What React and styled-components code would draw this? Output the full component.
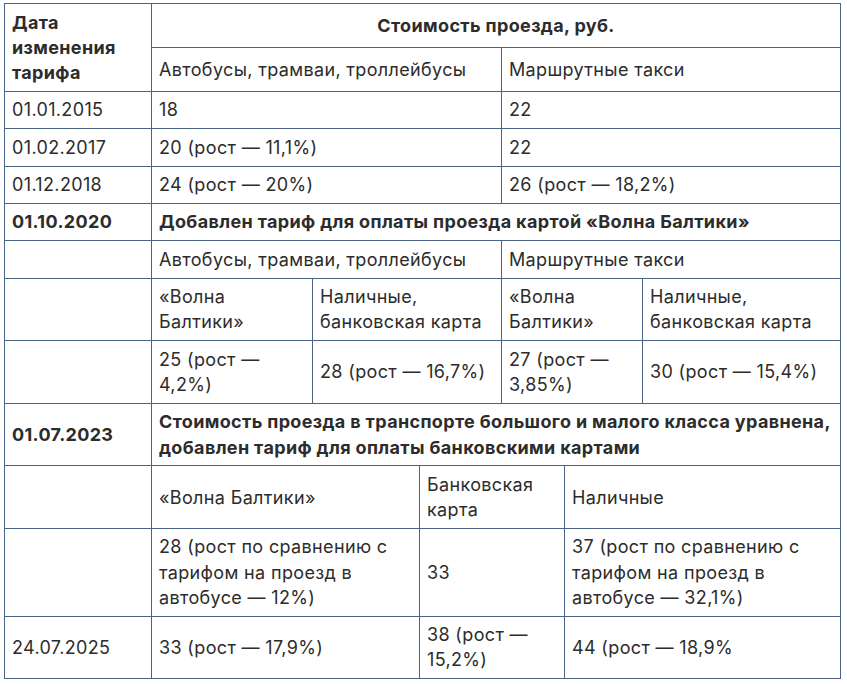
import React from "react";
import styled, { createGlobalStyle } from "styled-components";

const Global = createGlobalStyle`
  html, body { margin: 0; padding: 0; background: #fff; }
  body { font-family: Inter, "Noto Sans", sans-serif; color: #2c2c2c; }
`;

const Page = styled.div`
  padding: 3px 0 0 4px;
  overflow: hidden;
  height: 684px;
  box-sizing: border-box;
`;

const Table = styled.table`
  border-collapse: collapse;
  table-layout: fixed;
  width: 837px;
  font-size: 18px;
  line-height: 1.4;
  letter-spacing: 0.35px;
`;

const Cell = styled.td`
  border: 1px solid #4b6385;
  padding: 5.6px 7px;
  vertical-align: ${(p) => (p.$top ? "top" : "middle")};
  text-align: ${(p) => (p.$center ? "center" : "left")};
  font-weight: ${(p) => (p.$bold ? 700 : 400)};
  white-space: nowrap;
`;

const Caption = styled.div`
  margin-top: 2px;
  font-size: 15px;
  font-style: italic;
  color: #8a8a8a;
  line-height: 20px;
  padding-left: 1px;
`;

const widths = [147, 161, 107, 82, 63, 78, 198];

export default function App() {
  return (
    <>
      <Global />
      <Page>
        <Table>
          <colgroup>
            {widths.map((w, i) => (
              <col key={i} style={{ width: w }} />
            ))}
          </colgroup>
          <tbody>
            <tr>
              <Cell $bold $top rowSpan={2}>
                Дата
                <br />
                изменения
                <br />
                тарифа
              </Cell>
              <Cell $bold $center colSpan={6}>
                Стоимость проезда, руб.
              </Cell>
            </tr>
            <tr>
              <Cell colSpan={3}>Автобусы, трамваи, троллейбусы</Cell>
              <Cell colSpan={3}>Маршрутные такси</Cell>
            </tr>
            <tr>
              <Cell>01.01.2015</Cell>
              <Cell colSpan={3}>18</Cell>
              <Cell colSpan={3}>22</Cell>
            </tr>
            <tr>
              <Cell>01.02.2017</Cell>
              <Cell colSpan={3}>20 (рост — 11,1%)</Cell>
              <Cell colSpan={3}>22</Cell>
            </tr>
            <tr>
              <Cell>01.12.2018</Cell>
              <Cell colSpan={3}>24 (рост — 20%)</Cell>
              <Cell colSpan={3}>26 (рост — 18,2%)</Cell>
            </tr>
            <tr>
              <Cell $bold>01.10.2020</Cell>
              <Cell $bold colSpan={6}>
                Добавлен тариф для оплаты проезда картой «Волна Балтики»
              </Cell>
            </tr>
            <tr>
              <Cell />
              <Cell colSpan={3}>Автобусы, трамваи, троллейбусы</Cell>
              <Cell colSpan={3}>Маршрутные такси</Cell>
            </tr>
            <tr>
              <Cell />
              <Cell>
                «Волна
                <br />
                Балтики»
              </Cell>
              <Cell colSpan={2}>
                Наличные,
                <br />
                банковская карта
              </Cell>
              <Cell colSpan={2}>
                «Волна
                <br />
                Балтики»
              </Cell>
              <Cell>
                Наличные,
                <br />
                банковская карта
              </Cell>
            </tr>
            <tr>
              <Cell />
              <Cell>
                25 (рост —
                <br />
                4,2%)
              </Cell>
              <Cell colSpan={2}>28 (рост — 16,7%)</Cell>
              <Cell colSpan={2}>
                27 (рост —
                <br />
                3,85%)
              </Cell>
              <Cell>30 (рост — 15,4%)</Cell>
            </tr>
            <tr>
              <Cell $bold>01.07.2023</Cell>
              <Cell $bold colSpan={6}>
                Стоимость проезда в транспорте большого и малого класса уравнена,
                <br />
                добавлен тариф для оплаты банковскими картами
              </Cell>
            </tr>
            <tr>
              <Cell />
              <Cell colSpan={2}>«Волна Балтики»</Cell>
              <Cell colSpan={2}>
                Банковская
                <br />
                карта
              </Cell>
              <Cell colSpan={2}>Наличные</Cell>
            </tr>
            <tr>
              <Cell />
              <Cell colSpan={2}>
                28 (рост по сравнению с
                <br />
                тарифом на проезд в
                <br />
                автобусе — 12%)
              </Cell>
              <Cell colSpan={2}>33</Cell>
              <Cell colSpan={2}>
                37 (рост по сравнению с
                <br />
                тарифом на проезд в
                <br />
                автобусе — 32,1%)
              </Cell>
            </tr>
            <tr>
              <Cell>24.07.2025</Cell>
              <Cell colSpan={2}>33 (рост — 17,9%)</Cell>
              <Cell colSpan={2}>
                38 (рост —
                <br />
                15,2%)
              </Cell>
              <Cell colSpan={2}>44 (рост — 18,9%</Cell>
            </tr>
          </tbody>
        </Table>
        <Caption>Как менялась цена билета за последний год</Caption>
      </Page>
    </>
  );
}
